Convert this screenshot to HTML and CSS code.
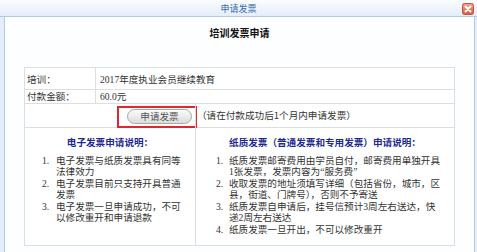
FILE: index.html
```html
<!DOCTYPE html>
<html lang="zh-CN">
<head>
    <meta charset="UTF-8">
    <meta name="viewport" content="width=device-width, initial-scale=1.0">
    <title>申请发票</title>
    <link rel="stylesheet" href="styles.css">
</head>
<body>
    <div class="window">
        <div class="titlebar">
            <span class="title">申请发票</span>
            <span class="close">
                <svg width="12" height="12" viewBox="0 0 12 12">
                    <defs>
                        <linearGradient id="cg" x1="0" y1="0" x2="0" y2="1">
                            <stop offset="0" stop-color="#f4a792"/>
                            <stop offset="1" stop-color="#d9593f"/>
                        </linearGradient>
                    </defs>
                    <rect x="0.5" y="0.5" width="11" height="11" rx="2" fill="url(#cg)" stroke="#c0533d"/>
                    <path d="M3.5 3.5 L8.5 8.5 M8.5 3.5 L3.5 8.5" stroke="#fff" stroke-width="1.8" stroke-linecap="round"/>
                </svg>
            </span>
        </div>
        <div class="frame">
            <h1>培训发票申请</h1>
            <div class="sheet">
                <div class="info-row first">
                    <div class="label">培训：</div>
                    <div class="value">2017年度执业会员继续教育</div>
                </div>
                <div class="info-row second">
                    <div class="label">付款金额：</div>
                    <div class="value">60.0元</div>
                </div>
                <div class="split action">
                    <div class="cell btn-cell">
                        <div class="highlight">
                            <button class="apply">申请发票</button>
                        </div>
                    </div>
                    <div class="cell hint">（请在付款成功后1个月内申请发票）</div>
                </div>
                <div class="split notes">
                    <div class="cell left">
                        <h2>电子发票申请说明：</h2>
                        <ul class="steps">
                            <li><span class="num">1.</span><span class="txt">电子发票与纸质发票具有同等法律效力</span></li>
                            <li><span class="num">2.</span><span class="txt">电子发票目前只支持开具普通发票</span></li>
                            <li><span class="num">3.</span><span class="txt">电子发票一旦申请成功，不可以修改重开和申请退款</span></li>
                        </ul>
                    </div>
                    <div class="cell right">
                        <h2>纸质发票（普通发票和专用发票）申请说明：</h2>
                        <ul class="steps">
                            <li><span class="num">1.</span><span class="txt">纸质发票邮寄费用由学员自付，邮寄费用单独开具1张发票，发票内容为“服务费”</span></li>
                            <li><span class="num">2.</span><span class="txt">收取发票的地址须填写详细（包括省份，城市，区县，街道、门牌号），否则不予寄送</span></li>
                            <li><span class="num">3.</span><span class="txt">纸质发票自申请后，挂号信预计3周左右送达，快递2周左右送达</span></li>
                            <li><span class="num">4.</span><span class="txt">纸质发票一旦开出，不可以修改重开</span></li>
                        </ul>
                    </div>
                </div>
            </div>
        </div>
    </div>
</body>
</html>
```

FILE: styles.css
```css
body {
    margin: 0;
    font-family: "Liberation Serif", "Noto Sans CJK SC", serif;
    font-size: 9.6px;
    color: #333;
}
.window {
    width: 477px;
    height: 252px;
    background: #e4edf8;
    display: flex;
    flex-direction: column;
    overflow: hidden;
}
.titlebar {
    height: 16px;
    background: linear-gradient(#fbfdff, #e3edf9);
    border-bottom: 1px solid #b2c8e6;
    display: flex;
    align-items: center;
    justify-content: center;
    position: relative;
}
.title {
    font-family: "Noto Sans CJK SC", sans-serif;
    font-size: 9px;
    color: #3a68ad;
}
.close {
    position: absolute;
    right: 3px;
    top: 3px;
    width: 12px;
    height: 12px;
    display: block;
}
.close svg {
    display: block;
}
.frame {
    flex: 1;
    margin: 0 2px 0 4px;
    border-left: 1px solid #b3c7e2;
    border-right: 1px solid #b3c7e2;
    background: #fdfeff;
    padding: 0 19px;
}
h1 {
    margin: 10px 0 0;
    font-family: "Noto Sans CJK SC", sans-serif;
    font-size: 10px;
    line-height: 12px;
    font-weight: bold;
    color: #111;
    text-align: center;
}
.sheet {
    margin-top: 28px;
    border: 1px solid #dedede;
    background: #fff;
}
.info-row {
    display: grid;
    grid-template-columns: 71px 1fr;
    border-bottom: 1px solid #dedede;
}
.info-row.first {
    height: 21px;
    line-height: 24px;
}
.info-row.second {
    height: 13px;
    line-height: 14px;
}
.label {
    padding-left: 2px;
    border-right: 1px solid #dedede;
    color: #333;
}
.value {
    padding-left: 4px;
    color: #333;
}
.split {
    display: grid;
    grid-template-columns: 170px 1fr;
}
.split .cell + .cell {
    border-left: 1px solid #dedede;
}
.action {
    height: 23px;
    border-bottom: 1px solid #dedede;
}
.btn-cell {
    display: flex;
    justify-content: flex-end;
    align-items: flex-start;
    padding-top: 2px;
}
.highlight {
    width: 73px;
    height: 18px;
    border: 2px solid #e0262e;
    margin-right: -2px;
    display: flex;
    align-items: flex-start;
    justify-content: flex-end;
    padding: 0 3px 0 0;
    box-sizing: content-box;
}
.apply {
    margin-top: 1px;
    width: 65px;
    height: 15px;
    padding: 0;
    border: 1px solid #a8a8a8;
    border-radius: 8px;
    background: linear-gradient(#fbfbfb, #dcdcdc);
    font-family: "Noto Sans CJK SC", sans-serif;
    font-size: 9.6px;
    line-height: 13px;
    color: #555;
}
.hint {
    line-height: 23px;
    padding-left: 1px;
    font-family: "Noto Sans CJK SC", sans-serif;
    color: #333;
}
.notes {
    height: 117px;
}
h2 {
    margin: 8px 0 0;
    font-family: "Noto Sans CJK SC", sans-serif;
    font-size: 9.6px;
    line-height: 12px;
    font-weight: bold;
    color: #1d2a8e;
    text-align: center;
}
.steps {
    list-style: none;
    margin: 8px 0 0;
    padding: 0;
}
.steps li {
    display: flex;
    margin-bottom: 2px;
    line-height: 10.5px;
}
.steps .num {
    font-family: "Liberation Serif", serif;
    flex: none;
}
.left .steps {
    padding-left: 17px;
}
.left .num {
    width: 14px;
}
.left .txt {
    width: 126px;
}
.right .steps {
    padding-left: 20px;
}
.right .num {
    width: 13px;
}
.right .txt {
    width: 214px;
}
.steps .txt {
    font-family: "Liberation Serif", "Noto Sans CJK SC", serif;
}
```
